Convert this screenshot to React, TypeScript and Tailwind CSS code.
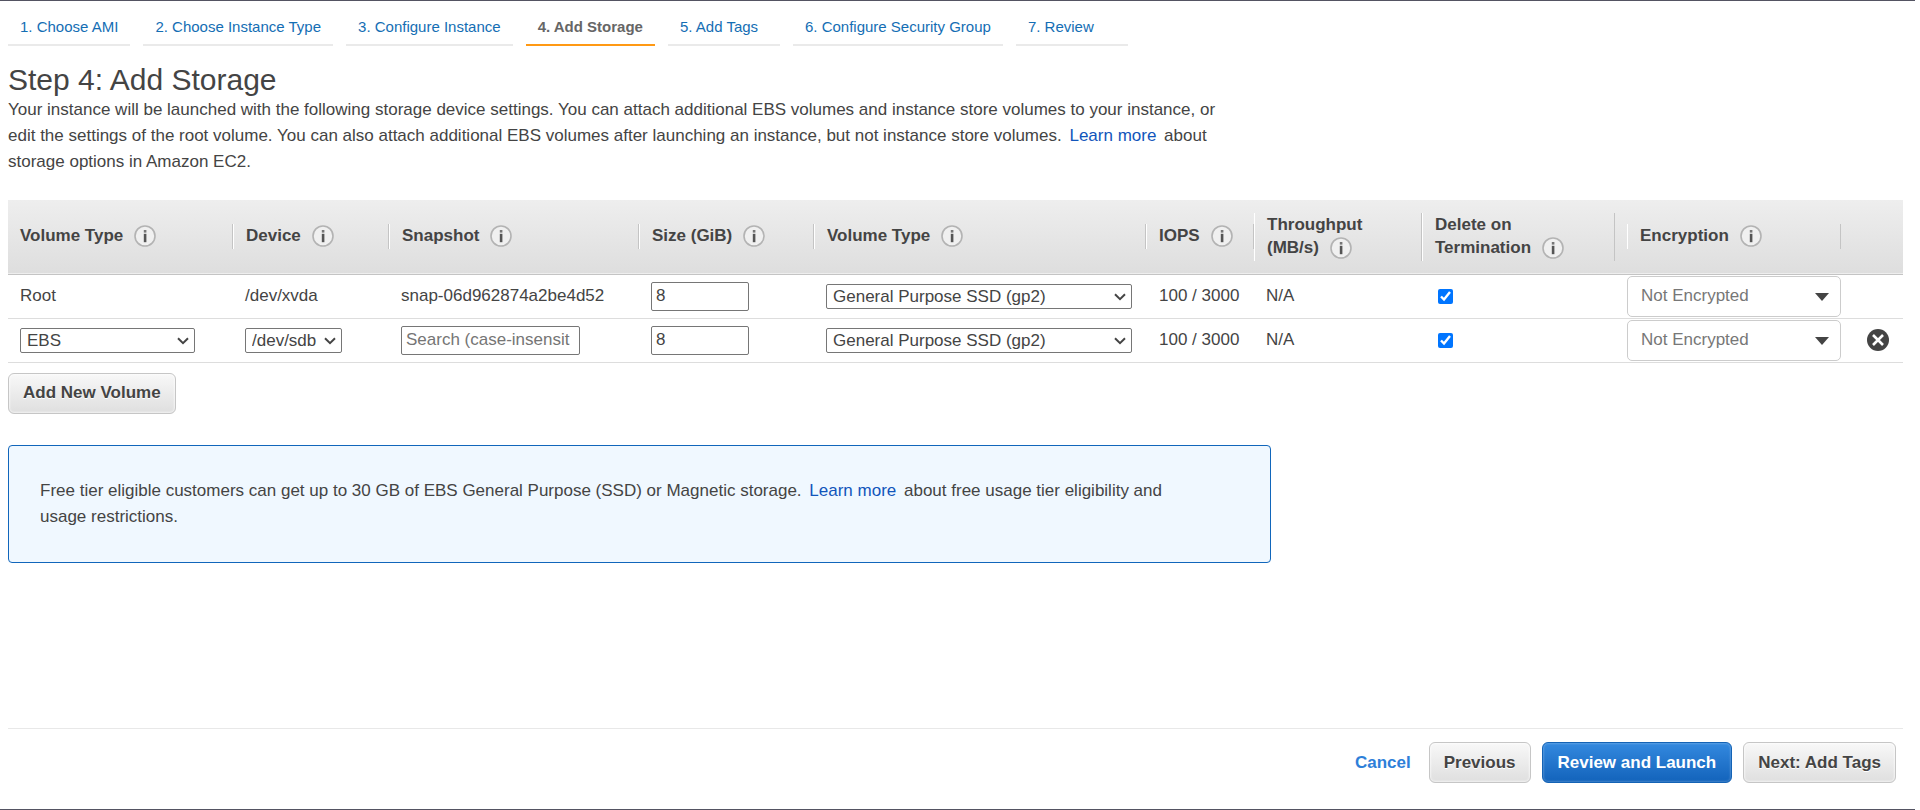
import React from "react";

const steps = [
  { label: "1. Choose AMI" },
  { label: "2. Choose Instance Type" },
  { label: "3. Configure Instance" },
  { label: "4. Add Storage", active: true },
  { label: "5. Add Tags" },
  { label: "6. Configure Security Group" },
  { label: "7. Review" },
];

function InfoIcon() {
  return (
    <svg viewBox="0 0 22 22" className="mb-0.5 ml-[11px] inline-block size-[22px] shrink-0 align-middle" aria-hidden="true">
      <circle cx="11" cy="11" r="10" fill="#f0f0f0" stroke="#b3b3b3" strokeWidth="1.6" />
      <rect x="9.8" y="5" width="2.6" height="2.6" fill="#777" />
      <path d="M9.8 8.8h2.6v8.4H9.8z" fill="#555" />
    </svg>
  );
}

type HeaderProps = { children: React.ReactNode; first?: boolean; inset?: boolean };

function Header({ children, first = false, inset = false }: HeaderProps) {
  return (
    <th scope="col" className={"p-0 text-left align-middle font-bold " + (inset ? "pr-3" : "")}>
      <div
        className={
          "border-r border-r-[#c4c4c4] pl-3 leading-[23px] " + (first ? "" : "border-l border-l-white")
        }
      >
        {children}
      </div>
    </th>
  );
}

const inputClass = "h-[29px] rounded-[2px] border border-[#767676] bg-white px-1 text-[#444] placeholder:text-[#757575]";

function PlainSelect({ label, value, width }: { label: string; value: string; width: string }) {
  return (
    <div className={"relative " + width}>
      <select
        aria-label={label}
        className="block h-[25px] w-full appearance-none rounded-[2px] border border-[#767676] bg-white pl-[6px] leading-[23px] text-[#444]"
      >
        <option>{value}</option>
      </select>
      <svg viewBox="0 0 12 8" className="pointer-events-none absolute top-[9px] right-[6px] h-2 w-3" aria-hidden="true">
        <path d="M1 1.2l5 4.9 5-4.9" fill="none" stroke="#444" strokeWidth="2" />
      </svg>
    </div>
  );
}

function EncryptionSelect({ label }: { label: string }) {
  return (
    <div className="relative">
      <select
        aria-label={label}
        className="block h-[41px] w-full appearance-none rounded-[5px] border border-[#ccc] bg-white pl-[13px] text-[#777]"
      >
        <option>Not Encrypted</option>
      </select>
      <svg viewBox="0 0 14 8" className="pointer-events-none absolute top-[17px] right-3 h-2 w-[14px]" aria-hidden="true">
        <path d="M0 0h14L7 8z" fill="#444" />
      </svg>
    </div>
  );
}

function VolumeCells({ row }: { row: string }) {
  return (
    <>
      <td className="py-0 pl-3">
        <input aria-label={row + " size (GiB)"} defaultValue="8" className={inputClass + " block w-[98px]"} />
      </td>
      <td className="py-0 pl-3">
        <PlainSelect label={row + " volume type"} value="General Purpose SSD (gp2)" width="w-[306px]" />
      </td>
      <td className="py-0 pl-[13px] whitespace-nowrap">100 / 3000</td>
      <td className="py-0 pl-3">N/A</td>
      <td className="py-0 pl-4">
        <input
          type="checkbox"
          defaultChecked
          aria-label={row + " delete on termination"}
          className="block size-[15px] accent-[#0075ff]"
        />
      </td>
      <td className="p-0">
        <EncryptionSelect label={row + " encryption"} />
      </td>
    </>
  );
}

const grayButton =
  "h-[41px] rounded-[6px] border border-[#c6c6c6] bg-linear-to-b from-[#f8f8f8] to-[#dfdfdf] px-[14px] font-bold text-[#444] shadow-[inset_0_0_2px_1px_rgba(255,255,255,0.6)] [text-shadow:0_1px_0_#fff]";

export default function App() {
  return (
    <div className="mr-[5px] flex min-h-screen flex-col border-y border-[#545462] bg-white pr-3 pl-2 font-['Liberation_Sans',Arial,sans-serif] text-[17px] leading-[26px] text-[#444]">
      <nav aria-label="Launch steps" className="flex gap-[13px] pt-2 text-[15px]">
        {steps.map((s) => (
          <a
            key={s.label}
            href="#"
            aria-current={s.active ? "step" : undefined}
            className={
              "h-[37px] min-w-[112px] border-b-2 px-3 leading-9 whitespace-nowrap " +
              (s.active ? "border-[#ff9914] font-bold text-[#666]" : "border-[#eaeaea] text-[#146eb4]")
            }
          >
            {s.label}
          </a>
        ))}
      </nav>

      <main className="flex-1">
        <h1 className="mt-[19px] mb-[2px] text-[30px] leading-[30px]">Step 4: Add Storage</h1>
        <p className="max-w-[1230px]">
          Your instance will be launched with the following storage device settings. You can attach additional EBS
          volumes and instance store volumes to your instance, or edit the settings of the root volume. You can also
          attach additional EBS volumes after launching an instance, but not instance store volumes.{" "}
          <a href="#" className="mx-[3px] text-[#1155bb]">Learn more</a> about storage options in Amazon EC2.
        </p>

        <div className="mt-[25px] overflow-x-auto">
          <table className="w-full table-fixed border-collapse">
            <colgroup>
              <col className="w-[225px]" />
              <col className="w-[156px]" />
              <col className="w-[250px]" />
              <col className="w-[175px]" />
              <col className="w-[332px]" />
              <col className="w-[108px]" />
              <col className="w-[168px]" />
              <col className="w-[205px]" />
              <col className="w-[214px]" />
              <col className="w-[62px]" />
            </colgroup>
            <thead>
              <tr className="h-[74px] border-b border-[#c4c4c4] bg-linear-to-b from-[#eeeeee] to-[#dedede]">
                <Header first>Volume Type<InfoIcon /></Header>
                <Header>Device<InfoIcon /></Header>
                <Header>Snapshot<InfoIcon /></Header>
                <Header>Size (GiB)<InfoIcon /></Header>
                <Header>Volume Type<InfoIcon /></Header>
                <Header>IOPS<InfoIcon /></Header>
                <Header>Throughput<br />(MB/s)<InfoIcon /></Header>
                <Header inset>Delete on<br />Termination<InfoIcon /></Header>
                <Header>Encryption<InfoIcon /></Header>
                <td />
              </tr>
            </thead>
            <tbody>
              <tr className="h-11 border-b border-[#ddd]">
                <td className="py-0 pl-3">Root</td>
                <td className="py-0 pl-3">/dev/xvda</td>
                <td className="py-0 pl-3 whitespace-nowrap">snap-06d962874a2be4d52</td>
                <VolumeCells row="Root" />
                <td />
              </tr>
              <tr className="h-11 border-b border-[#ddd]">
                <td className="py-0 pl-3">
                  <PlainSelect label="Volume kind" value="EBS" width="w-[175px]" />
                </td>
                <td className="py-0 pl-3">
                  <PlainSelect label="Device" value="/dev/sdb" width="w-[97px]" />
                </td>
                <td className="py-0 pl-3">
                  <input
                    aria-label="Snapshot"
                    placeholder="Search (case-insensit"
                    className={inputClass + " block w-[179px]"}
                  />
                </td>
                <VolumeCells row="EBS" />
                <td className="py-0 pl-[26px]">
                  <button type="button" aria-label="Remove volume" className="block">
                    <svg viewBox="0 0 22 22" className="size-[22px]" aria-hidden="true">
                      <circle cx="11" cy="11" r="11" fill="#444" />
                      <path d="M6 6l10 10M16 6L6 16" stroke="#fff" strokeWidth="2.6" />
                    </svg>
                  </button>
                </td>
              </tr>
            </tbody>
          </table>
        </div>

        <button type="button" className={grayButton + " mt-[10px] block"}>Add New Volume</button>

        <section className="mt-[31px] max-w-[1263px] rounded-[4px] border border-[#1166bb] bg-[#f0f8ff] px-[31px] py-8">
          <p className="max-w-[1160px]">
            Free tier eligible customers can get up to 30 GB of EBS General Purpose (SSD) or Magnetic storage.{" "}
            <a href="#" className="mx-[3px] text-[#1155bb]">Learn more</a> about free usage tier eligibility and usage
            restrictions.
          </p>
        </section>
      </main>

      <footer className="flex items-center justify-end gap-[11px] border-t border-[#e8e8e8] pt-[13px] pr-[7px] pb-[26px]">
        <a href="#" className="mr-[7px] font-bold text-[#2e7fd9]">Cancel</a>
        <button type="button" className={grayButton}>Previous</button>
        <button
          type="button"
          className="h-[41px] rounded-[6px] border border-[#1463b5] bg-linear-to-b from-[#3389df] to-[#1263bb] px-[15px] font-bold text-white shadow-[inset_0_0_2px_1px_rgba(255,255,255,0.2)]"
        >
          Review and Launch
        </button>
        <button type="button" className={grayButton}>Next: Add Tags</button>
      </footer>
    </div>
  );
}
